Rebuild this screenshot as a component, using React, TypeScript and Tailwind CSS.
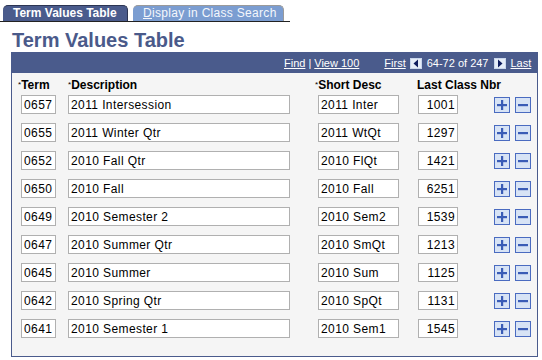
import React from "react";

const rows = [
  ["0657", "2011 Intersession", "2011 Inter", "1001"],
  ["0655", "2011 Winter Qtr", "2011 WtQt", "1297"],
  ["0652", "2010 Fall Qtr", "2010 FlQt", "1421"],
  ["0650", "2010 Fall", "2010 Fall", "6251"],
  ["0649", "2010 Semester 2", "2010 Sem2", "1539"],
  ["0647", "2010 Summer Qtr", "2010 SmQt", "1213"],
  ["0645", "2010 Summer", "2010 Sum", "1125"],
  ["0642", "2010 Spring Qtr", "2010 SpQt", "1131"],
  ["0641", "2010 Semester 1", "2010 Sem1", "1545"],
];

function Arrow({ dir }: { dir: "left" | "right" }) {
  return (
    <svg width="12" height="11" viewBox="0 0 12 11" className="block">
      <rect x="0.5" y="0.5" width="11" height="10" fill="#e6edf8" stroke="#c9d6ec" />
      {dir === "left" ? (
        <polygon points="8,1.5 8,9.5 3.5,5.5" fill="#0f1d5e" />
      ) : (
        <polygon points="4,1.5 4,9.5 8.5,5.5" fill="#0f1d5e" />
      )}
    </svg>
  );
}

function Btn({ kind }: { kind: "plus" | "minus" }) {
  return (
    <div className="w-[16px] h-[16px] border border-[#4a6bc0] bg-[#d7e3f5] flex items-center justify-center">
      <svg width="10" height="10" viewBox="0 0 10 10">
        <rect x="0" y="4" width="10" height="2.2" fill="#3a5cb6" />
        {kind === "plus" && <rect x="4" y="0" width="2.2" height="10" fill="#3a5cb6" />}
      </svg>
    </div>
  );
}

const inputCls =
  "h-[19px] border border-[#b0b0b0] bg-white text-[12px] tracking-[0.4px] text-black px-[2px] outline-none font-['Liberation_Sans',Arial,sans-serif]";

export default function App() {
  return (
    <div className="w-[542px] h-[360px] bg-white overflow-hidden font-['Liberation_Sans',Arial,sans-serif]">
      {/* Tabs */}
      <div className="flex items-end pl-[3px] pt-[5px] w-[290px] border-b border-[#222]">
        <div className="w-[125px] h-[16px] bg-[#4a5b8c] rounded-t-[5px] border-t border-r border-[#2c3553] text-white font-bold text-[12px] leading-[15px] pl-[10px]">
          Term Values Table
        </div>
        <div className="ml-[5px] w-[151px] h-[16px] bg-[#7b9dd1] rounded-t-[5px] border-t border-r border-[#9a9a9a] text-[#f4f7fc] text-[12px] tracking-[0.3px] leading-[15px] pl-[10px]">
          <span className="underline">D</span>isplay in Class Search
        </div>
      </div>

      {/* Title */}
      <div className="mt-[7px] pl-[12px] text-[20px] leading-[23px] font-bold text-[#4a5a8a]">
        Term Values Table
      </div>

      {/* Grid */}
      <div className="ml-[11px] w-[527px] border border-[#4a5b8c] bg-[#f5f5f5] pb-[9px]">
        <div className="h-[20px] bg-[#4a5b8c] flex items-center text-[11px] text-white pl-[272px]">
          <span className="underline">Find</span>
          <span className="mx-[3px]">|</span>
          <span className="underline">View 100</span>
          <span className="underline ml-[25px]">First</span>
          <span className="ml-[4px]"><Arrow dir="left" /></span>
          <span className="ml-[5px]">64-72 of 247</span>
          <span className="ml-[5px]"><Arrow dir="right" /></span>
          <span className="underline ml-[5px]">Last</span>
        </div>

        <div className="flex pt-[5px] h-[22px] text-[12px] leading-[14px] font-bold text-black">
          <div className="ml-[6px] w-[38px]"><span className="text-[8px] align-top font-normal">*</span>Term</div>
          <div className="ml-[12px] w-[222px]"><span className="text-[8px] align-top font-normal">*</span>Description</div>
          <div className="ml-[25px] w-[84px]"><span className="text-[8px] align-top font-normal">*</span>Short Desc</div>
          <div className="ml-[18px] w-[110px]">Last Class Nbr</div>
        </div>

        {rows.map((r) => (
          <div key={r[0]} className="flex h-[28px]">
            <input readOnly value={r[0]} className={`${inputCls} ml-[9px] w-[35px]`} />
            <input readOnly value={r[1]} className={`${inputCls} ml-[12px] w-[222px]`} />
            <input readOnly value={r[2]} className={`${inputCls} ml-[28px] w-[81px]`} />
            <input readOnly value={r[3]} className={`${inputCls} ml-[19px] w-[40px] text-right`} />
            <div className="ml-[36px] mt-[2px]"><Btn kind="plus" /></div>
            <div className="ml-[5px] mt-[2px]"><Btn kind="minus" /></div>
          </div>
        ))}
      </div>
    </div>
  );
}
